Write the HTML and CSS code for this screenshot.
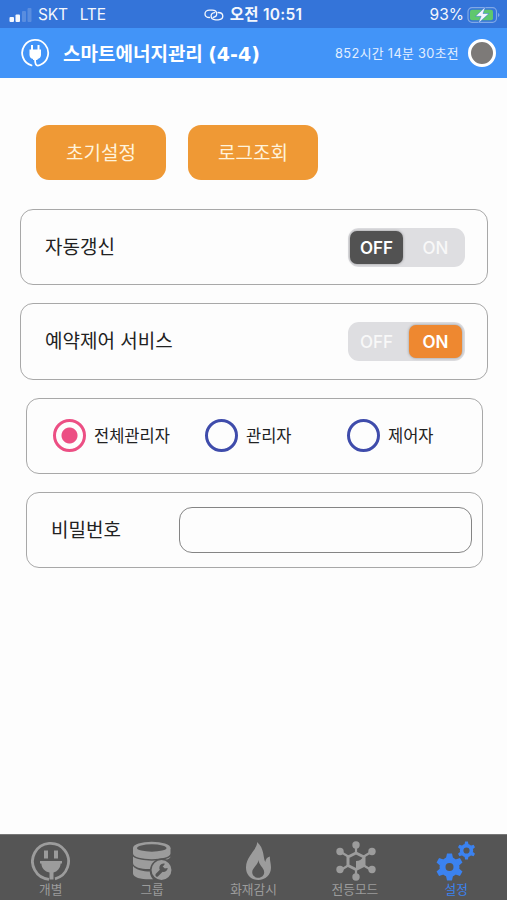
FILE: index.html
```
<!DOCTYPE html>
<html lang="ko">
<head>
    <meta charset="UTF-8">
    <meta name="viewport" content="width=device-width, initial-scale=1.0">
    <title>스마트에너지관리</title>
    <link rel="stylesheet" href="styles.css">
</head>
<body>
    <div class="status-bar">
        <div class="carrier">
            <svg width="24" height="16" viewBox="0 0 24 16" fill="#fff">
                <rect x="0.5" y="10" width="4.500" height="5" rx="1"/>
                <rect x="6.500" y="7.500" width="4.500" height="7.500" rx="1"/>
                <rect x="13" y="4" width="4" height="11" rx="1" opacity=".2"/>
                <rect x="18.500" y="1" width="4" height="14" rx="1" opacity=".2"/>
            </svg>
            <span class="sim">SKT</span>
            <span>LTE</span>
        </div>
        <div class="clock">
            <svg width="20" height="12" viewBox="0 0 20 12" fill="none" stroke="#fff" stroke-width="1.300" stroke-linecap="round">
                <path d="M5.500 8.500C2.500 8.500 1 6.800 1 4.900S2.700 1.200 5.500 1.200h2.700c2.800 0 4.500 1.600 4.500 3.600 0 1.900-1.500 3.300-3.500 3.600"/>
                <path d="M14 3.500c3.200 0 4.800 1.600 4.800 3.600s-1.700 3.700-4.500 3.700h-2.700c-2.800 0-4.500-1.700-4.500-3.700s1.500-3.300 3.500-3.500"/>
            </svg>
            <span>오전 10:51</span>
        </div>
        <div class="battery">
            <span>93%</span>
            <svg width="34" height="18" viewBox="0 0 34 18">
                <rect x="1" y="1.700" width="28.500" height="14.600" rx="4" fill="none" stroke="#fff" stroke-opacity=".4" stroke-width="1.200"/>
                <rect x="3" y="3.700" width="23" height="10.600" rx="2" fill="#62cc68"/>
                <path d="M31 7v4q1.500-.6 1.500-2T31 7z" fill="#fff" opacity=".4"/>
                <path d="M18.500 .8L8.500 10.300h5.600L11.300 17.200 22 7.500h-6z" fill="#fff" stroke="#3474d9" stroke-width=".5"/>
            </svg>
        </div>
    </div>

    <header>
        <svg class="logo" width="30" height="30" viewBox="0 0 30 30">
            <path d="M11.500 27.400A13 13 0 1 1 20 27C15.500 29 15 25.500 15 20" fill="none" stroke="#fff" stroke-width="1.800" stroke-linecap="round"/>
            <path d="M11 7h2v4.500h4.500V7h2v4.500h1.500v5.500a4.500 4.500 0 0 1-3.500 4v1h-4.500v-1a4.500 4.500 0 0 1-3.500-4v-5.500H11z" fill="#fff"/>
        </svg>
        <h1>스마트에너지관리 <span class="count">(4-4)</span></h1>
        <span class="elapsed">852시간 14분 30초전</span>
        <span class="lamp"></span>
    </header>

    <main>
        <div class="actions">
            <button>초기설정</button>
            <button>로그조회</button>
        </div>

        <div class="card">
            <span class="label">자동갱신</span>
            <div class="toggle">
                <span class="off active">OFF</span>
                <span class="on">ON</span>
            </div>
        </div>

        <div class="card">
            <span class="label">예약제어 서비스</span>
            <div class="toggle">
                <span class="off">OFF</span>
                <span class="on active">ON</span>
            </div>
        </div>

        <div class="card narrow roles">
            <div class="radio checked"><i></i><span>전체관리자</span></div>
            <div class="radio"><i></i><span>관리자</span></div>
            <div class="radio"><i></i><span>제어자</span></div>
        </div>

        <div class="card narrow">
            <label class="label" for="password">비밀번호</label>
            <input type="password" id="password">
        </div>
    </main>

    <nav>
        <a>
            <svg width="40" height="40" viewBox="0 0 40 40">
                <path d="M18 38.300A18 18 0 1 1 24 37.800" fill="none" stroke="currentColor" stroke-width="2.800"/>
                <path d="M13 9.500h4v8h-4zM23 9.500h4v8h-4zM9 20h22v2.500h-1.300c-.5 5-3.500 8-7.200 9v7h-4v-7c-4.700-1-7.700-4-8.200-9H9z" fill="currentColor"/>
            </svg>
            <span>개별</span>
        </a>
        <a>
            <svg width="40" height="40" viewBox="0 0 40 40">
                <path d="M1 7v5.500c0 7.500 37.500 7.500 37.500 0V7zM1 15.500v6.500c0 5 11 6.500 17.500 6 1.500-6 7-9.500 12.500-8.500 4-.7 7.500-2 7.500-4-5 5.500-32 5.500-37.500 0zM1 25v7.500c0 4.500 11 6.500 20 5.700-2-2-3.200-5-3.200-7.700C11 30.500 4 29 1 25z" fill="currentColor"/>
                <ellipse cx="19.750" cy="7" rx="18.750" ry="6.200" fill="currentColor"/>
                <ellipse cx="19.750" cy="7" rx="14.800" ry="3.700" fill="#555"/>
                <circle cx="29.500" cy="29" r="10.700" fill="currentColor" stroke="#555" stroke-width="1.500"/>
                <path d="M25 34l6-6" stroke="#555" stroke-width="3.200" stroke-linecap="round"/>
                <path d="M33 22.800a4.200 4.200 0 1 0 2.700 4.200l-3.200.5-1.800-1.800z" fill="#555"/>
            </svg>
            <span>그룹</span>
        </a>
        <a>
            <svg class="flame" width="40" height="40" viewBox="0 0 40 40">
                <path d="M19 1c1 7-11 14-11 25.500C8 34 13 39 20.200 39S33 34 33 26.500c0-4-1.500-7.500-1-11-3 .7-4.500 3-4.700 5.500C25 17 26.500 7 19 1zM20.500 19c.3 5.500 5.700 7.500 5.700 12.300 0 3-2.500 5.500-5.800 5.500s-6.200-2.300-6.200-5.600c0-4.700 5.800-6.700 6.300-12.200z" fill="currentColor" fill-rule="evenodd"/>
            </svg>
            <span>화재감시</span>
        </a>
        <a>
            <svg class="hub" width="40" height="40" viewBox="0 0 40 40">
                <path d="M20 4v8M20 28v8M4 10.500l9 5.500M27 24l9 5.500M36 10.500L27 16M13 24l-9 5.500" stroke="currentColor" stroke-width="2.200"/>
                <path d="M20 12l8 4v8.500L20 28.500l-8-4V16z" fill="none" stroke="currentColor" stroke-width="3" stroke-linejoin="round"/>
                <path d="M20 20q5 0 7-4v9l-7 3z" fill="currentColor"/>
                <g fill="currentColor">
                    <circle cx="20" cy="4" r="3.700"/>
                    <circle cx="20" cy="36" r="3.700"/>
                    <circle cx="4" cy="10.500" r="3.700"/>
                    <circle cx="36" cy="10.500" r="3.700"/>
                    <circle cx="4" cy="28.500" r="3.700"/>
                    <circle cx="36" cy="28.500" r="3.700"/>
                </g>
            </svg>
            <span>전등모드</span>
        </a>
        <a class="current">
            <svg width="40" height="40" viewBox="0 0 40 40">
                <g transform="translate(13.500 26)">
                    <circle r="7" fill="none" stroke="currentColor" stroke-width="6"/>
                    <path d="M-3.500-9l1-4.500h5l1 4.500zM-3.500 9l1 4.500h5l1-4.500z" fill="currentColor"/>
                    <path d="M-3.500-9l1-4.500h5l1 4.500zM-3.500 9l1 4.500h5l1-4.500z" fill="currentColor" transform="rotate(60)"/>
                    <path d="M-3.500-9l1-4.500h5l1 4.500zM-3.500 9l1 4.500h5l1-4.500z" fill="currentColor" transform="rotate(120)"/>
                </g>
                <g transform="translate(30.500 9.500)">
                    <circle r="4.900" fill="none" stroke="currentColor" stroke-width="3.600"/>
                    <path d="M-2-6l.6-3h2.800l.6 3zM-2 6l.6 3h2.800l.6-3z" fill="currentColor"/>
                    <path d="M-2-6l.6-3h2.800l.6 3zM-2 6l.6 3h2.800l.6-3z" fill="currentColor" transform="rotate(60)"/>
                    <path d="M-2-6l.6-3h2.800l.6 3zM-2 6l.6 3h2.800l.6-3z" fill="currentColor" transform="rotate(120)"/>
                </g>
            </svg>
            <span>설정</span>
        </a>
    </nav>
</body>
</html>
```
FILE: styles.css
```
* {
    box-sizing: border-box;
}

body {
    font-family: "Noto Sans CJK KR", sans-serif;
    margin: 0;
    display: flex;
    flex-direction: column;
    height: 900px;
    background-color: #fdfdfd;
    color: #222;
}

svg {
    display: block;
    flex-shrink: 0;
}

.status-bar {
    display: grid;
    grid-template-columns: 1fr auto 1fr;
    align-items: center;
    height: 28px;
    padding: 2px 6px 0 9px;
    background-color: #3474d9;
    color: #fff;
    font-family: Inter, "Noto Sans CJK KR", sans-serif;
    font-size: 15.500px;
    line-height: 20px;
}

.carrier, .clock, .battery {
    display: flex;
    align-items: center;
    opacity: 0.95;
}

.carrier {
    letter-spacing: -0.2px;
}

.carrier .sim {
    margin: 0 12px 0 5px;
}

.clock {
    gap: 6px;
    margin-right: 4px;
    font-size: 15.500px;
    font-weight: 600;
    letter-spacing: 0.25px;
}

.battery {
    justify-content: flex-end;
    gap: 3px;
}

header {
    display: flex;
    align-items: center;
    height: 50px;
    padding: 0 11px 0 20px;
    background-color: #4294f8;
    color: #fff;
}

header h1 {
    margin: 0 auto 0 13px;
    font-size: 19px;
    font-weight: 700;
    line-height: 28px;
    white-space: nowrap;
}

header .count {
    font-family: "DejaVu Sans", sans-serif;
}

.elapsed {
    padding-bottom: 2px;
    font-family: Inter, "Noto Sans CJK KR", sans-serif;
    font-size: 12.800px;
    letter-spacing: 0.35px;
    color: #e3efff;
}

.lamp {
    width: 28px;
    height: 28px;
    margin-left: 9px;
    border: 3px solid #fff;
    border-radius: 50%;
    background-color: #7d7a78;
}

main {
    flex-grow: 1;
    display: flex;
    flex-direction: column;
    gap: 18px;
    padding: 47px 19px 0 20px;
}

.actions {
    display: flex;
    gap: 22px;
    padding: 0 16px;
    margin-bottom: 10px;
}

.actions button {
    width: 130px;
    height: 55px;
    margin-bottom: 1px;
    padding: 0 0 2px;
    border: none;
    border-radius: 13px;
    background-color: #ef9935;
    color: #fff3dc;
    font-family: inherit;
    font-size: 19px;
}

.card {
    display: flex;
    align-items: center;
    justify-content: space-between;
    height: 76.300px;
    padding: 0 22px 0 24px;
    border: 1px solid #a8a8a8;
    border-radius: 13px;
}

.card.narrow {
    margin: 0 5px 0 6px;
    padding-right: 10px;
}

.label {
    padding-bottom: 2px;
    font-size: 19px;
    line-height: 28px;
}

.toggle {
    display: flex;
    gap: 6px;
    width: 117px;
    height: 39px;
    padding: 3px 2px;
    border-radius: 11px;
    background-color: #dedee1;
    font-family: Inter, sans-serif;
    font-size: 17px;
    font-weight: 500;
    line-height: 34px;
    text-align: center;
    color: #f8f8f8;
}

.toggle span {
    width: 53px;
    border-radius: 7px;
}

.toggle .active {
    color: #fff;
    font-weight: 600;
    box-shadow: 0 0 3px rgba(0, 0, 0, 0.35);
}

.toggle .off.active {
    background-color: #525252;
}

.toggle .on.active {
    background-color: #ee8830;
}

.card.roles {
    display: grid;
    grid-template-columns: 152px 142px auto;
    justify-content: start;
    padding-left: 26px;
}

.radio {
    display: flex;
    align-items: center;
    gap: 8px;
    font-size: 16.500px;
}

.radio span {
    padding-bottom: 2px;
}

.radio i {
    width: 33px;
    height: 33px;
    border: 3px solid #3f4cab;
    border-radius: 50%;
}

.radio.checked i {
    border-color: #ec4f84;
    background: radial-gradient(circle, #ec4f84 7.500px, transparent 8.500px);
}

#password {
    width: 293px;
    height: 46px;
    margin-bottom: 1px;
    border: 1px solid #858585;
    border-radius: 13px;
    background: none;
}

nav {
    display: grid;
    grid-template-columns: repeat(5, 1fr);
    height: 66px;
    border-top: 1px solid #777;
    background-color: #555;
}

nav a {
    display: flex;
    flex-direction: column;
    align-items: center;
    padding-top: 6px;
    color: #9c9c9c;
    font-size: 12.700px;
    line-height: 16px;
}

nav .flame {
    margin-left: 9px;
}

nav .hub {
    margin-left: 2px;
}

nav .current {
    color: #3b82f0;
}
```
